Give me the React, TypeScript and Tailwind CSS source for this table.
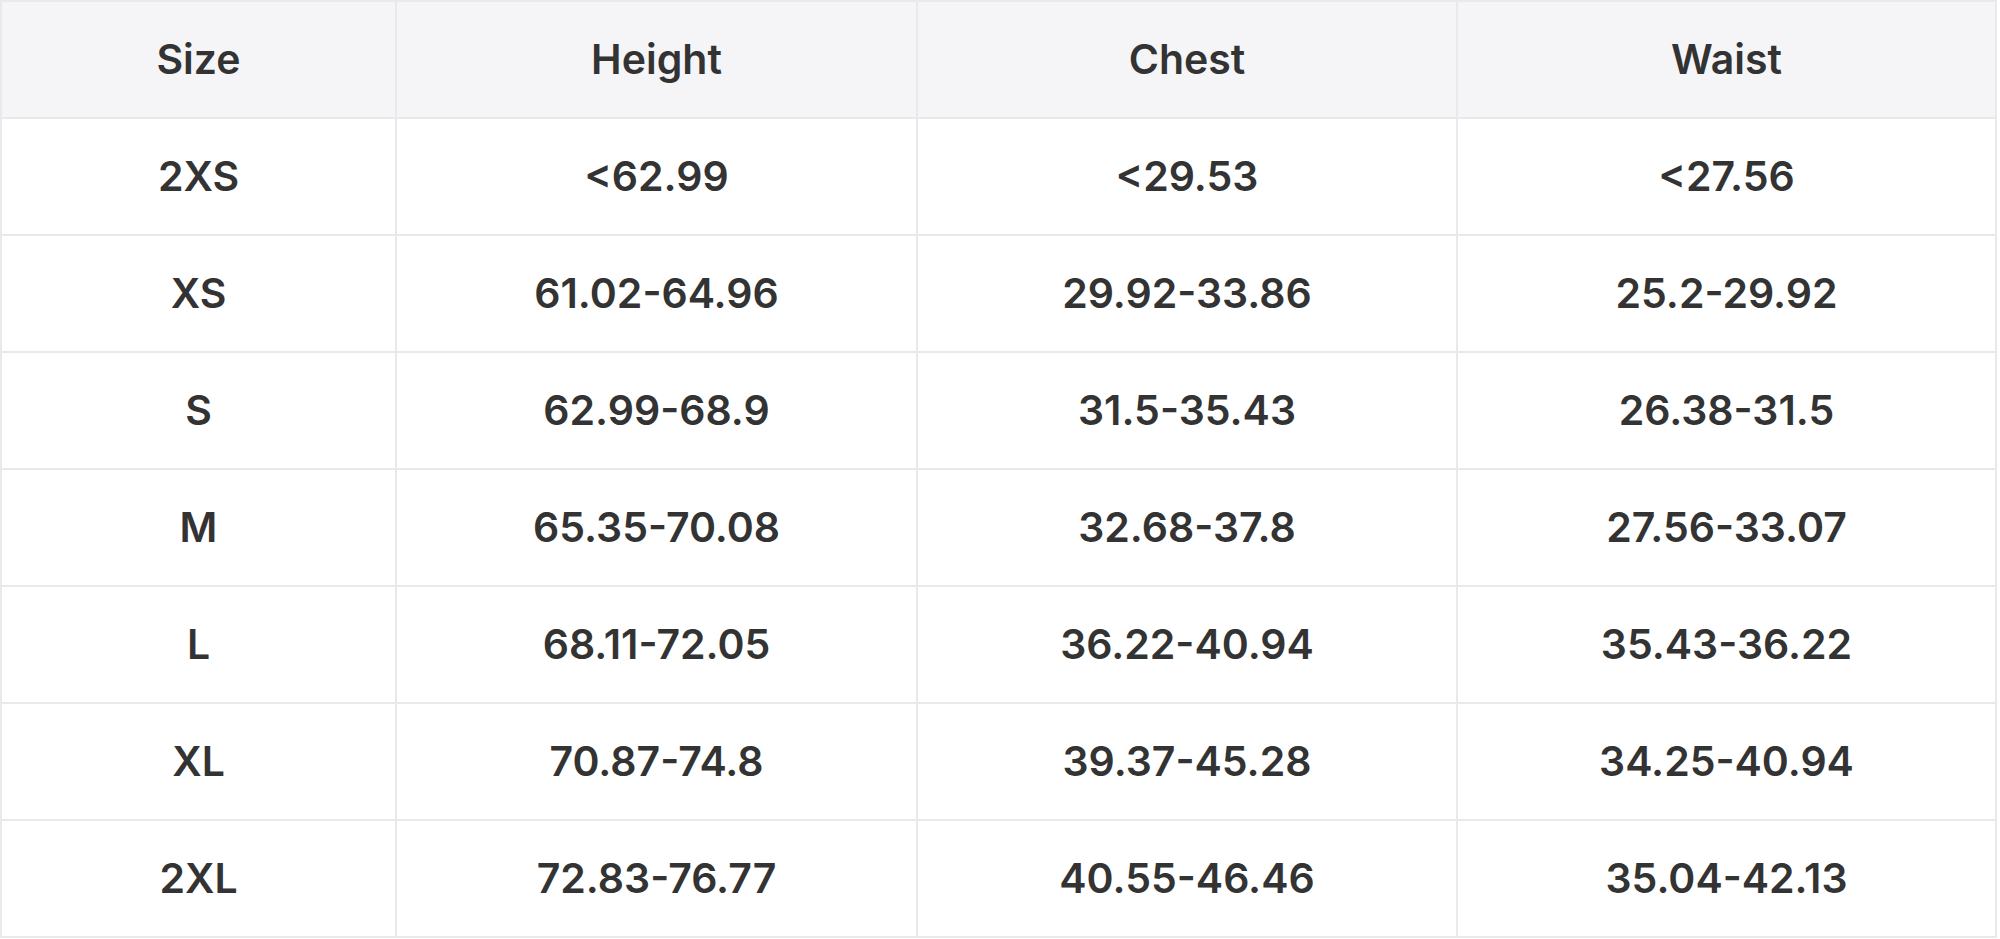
import React from "react";

const headers = ["Size", "Height", "Chest", "Waist"];
const rows = [
  ["2XS", "<62.99", "<29.53", "<27.56"],
  ["XS", "61.02-64.96", "29.92-33.86", "25.2-29.92"],
  ["S", "62.99-68.9", "31.5-35.43", "26.38-31.5"],
  ["M", "65.35-70.08", "32.68-37.8", "27.56-33.07"],
  ["L", "68.11-72.05", "36.22-40.94", "35.43-36.22"],
  ["XL", "70.87-74.8", "39.37-45.28", "34.25-40.94"],
  ["2XL", "72.83-76.77", "40.55-46.46", "35.04-42.13"],
];

export default function App() {
  return (
    <div className="w-[2000px] h-[939px] bg-white">
      <div
        className="grid w-[1997px] grid-cols-[393px_519px_538px_537px] auto-rows-[115px] gap-[2px] p-[2px] bg-[#e9e9eb] text-[#333333] text-[41px] font-semibold"
        style={{ fontFamily: "Inter, 'Noto Sans', sans-serif" }}
      >
        {headers.map((h) => (
          <div key={h} className="flex items-center justify-center bg-[#f5f5f7]">
            {h}
          </div>
        ))}
        {rows.map((r, i) =>
          r.map((c, j) => (
            <div key={`${i}-${j}`} className="flex items-center justify-center bg-white">
              {c}
            </div>
          ))
        )}
      </div>
    </div>
  );
}
